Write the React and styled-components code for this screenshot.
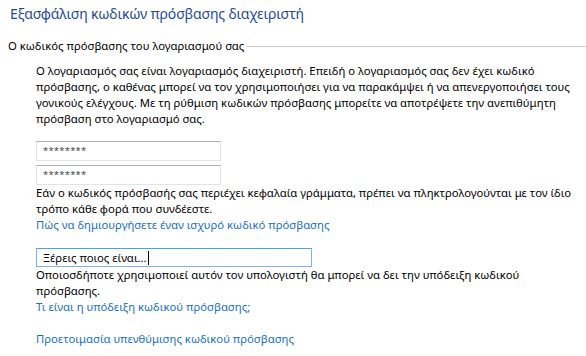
import styled, { createGlobalStyle } from "styled-components";

const GlobalStyle = createGlobalStyle`
  html, body {
    margin: 0;
    padding: 0;
    background: #ffffff;
  }
  body {
    font-family: "Noto Sans", "Liberation Sans", sans-serif;
    font-size: 11.3px;
    color: #000;
  }
`;

const Page = styled.div`
  width: 586px;
  height: 356px;
  overflow: hidden;
  display: flex;
  flex-direction: column;
`;

const Title = styled.h1`
  margin: 4px 0 0 10px;
  font-size: 14px;
  letter-spacing: -0.15px;
  line-height: 20px;
  font-weight: normal;
  color: #1e4b9a;
  white-space: nowrap;
`;

const GroupHeader = styled.div`
  margin: 14px 0 0 8px;
  display: flex;
  align-items: center;
  gap: 2px;
  line-height: 16px;
  white-space: nowrap;
`;

const Rule = styled.div`
  flex: 1;
  height: 1px;
  background: #cccccc;
`;

const Body = styled.div`
  padding-left: 36px;
  display: flex;
  flex-direction: column;
  align-items: flex-start;
  white-space: nowrap;
`;

const Text = styled.p`
  margin: ${(p) => p.$top || 0}px 0 0;
  line-height: 16px;
`;

const Link = styled.a`
  margin-top: ${(p) => p.$top || 0}px;
  line-height: 16px;
  color: #1a6fc4;
  text-decoration: none;
  cursor: pointer;
`;

const Field = styled.div`
  box-sizing: border-box;
  margin-top: ${(p) => p.$top || 0}px;
  width: ${(p) => p.$width}px;
  height: ${(p) => p.$height || 20}px;
  padding: 0 6px;
  display: flex;
  align-items: center;
  border: 1px solid ${(p) => (p.$focus ? "#7eb4ea" : "#e0e3e8")};
  border-top-color: ${(p) => (p.$focus ? "#569de5" : "#abadb3")};
  color: #000;
  line-height: 16px;
`;

const Mask = styled.span`
  font-size: 9.5px;
  color: #3a3f4a;
  letter-spacing: 0.2px;
`;

const Caret = styled.span`
  display: inline-block;
  width: 1px;
  height: 14px;
  background: #000;
  margin-left: 1px;
`;

export default function App() {
  return (
    <Page>
      <GlobalStyle />
      <Title>Εξασφάλιση κωδικών πρόσβασης διαχειριστή</Title>
      <GroupHeader>
        <span>Ο κωδικός πρόσβασης του λογαριασμού σας</span>
        <Rule />
      </GroupHeader>
      <Body>
        <Text $top={9}>
          Ο λογαριασμός σας είναι λογαριασμός διαχειριστή. Επειδή ο λογαριασμός σας δεν έχει κωδικό
          <br />
          πρόσβασης, ο καθένας μπορεί να τον χρησιμοποιήσει για να παρακάμψει ή να απενεργοποιήσει τους
          <br />
          γονικούς ελέγχους. Με τη ρύθμιση κωδικών πρόσβασης μπορείτε να αποτρέψετε την ανεπιθύμητη
          <br />
          πρόσβαση στο λογαριασμό σας.
        </Text>
        <Field $top={14} $width={185}>
          <Mask>********</Mask>
        </Field>
        <Field $top={4} $width={185}>
          <Mask>********</Mask>
        </Field>
        <Text>
          Εάν ο κωδικός πρόσβασής σας περιέχει κεφαλαία γράμματα, πρέπει να πληκτρολογούνται με τον ίδιο
          <br />
          τρόπο κάθε φορά που συνδέεστε.
        </Text>
        <Link>Πώς να δημιουργήσετε έναν ισχυρό κωδικό πρόσβασης</Link>
        <Field $top={15} $width={276} $height={19} $focus>
          Ξέρεις ποιος είναι...
          <Caret />
        </Field>
        <Text>
          Οποιοσδήποτε χρησιμοποιεί αυτόν τον υπολογιστή θα μπορεί να δει την υπόδειξη κωδικού
          <br />
          πρόσβασης.
        </Text>
        <Link>Τι είναι η υπόδειξη κωδικού πρόσβασης;</Link>
        <Link $top={16}>Προετοιμασία υπενθύμισης κωδικού πρόσβασης</Link>
      </Body>
    </Page>
  );
}
